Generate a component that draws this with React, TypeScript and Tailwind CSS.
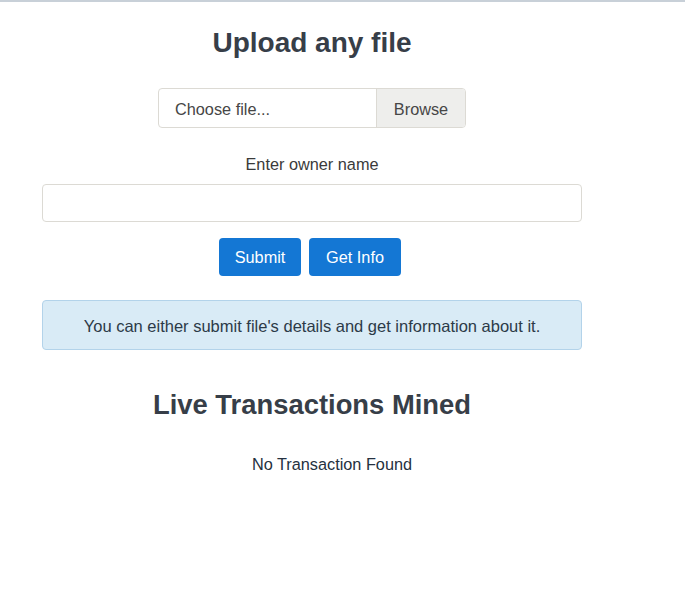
export default function App() {
  return (
    <div className="min-h-screen bg-white border-t-2 border-[#c8d0d8] font-['Liberation_Sans',Arial,sans-serif] text-[#373e48]">
      <div className="w-[540px] ml-[42px] flex flex-col items-center">
        <h1 className="mt-[24px] text-[28px] leading-[34px] font-bold">Upload any file</h1>

        <div className="mt-[28px] w-[308px] h-[40px] flex rounded border border-[#dcdad4] overflow-hidden text-[16.3px]">
          <div className="flex-1 flex items-center px-4 pt-[3px] text-[#464646]">Choose file...</div>
          <div className="w-[89px] flex items-center justify-center pt-[3px] bg-[#eeeeec] border-l border-[#dcdad4] text-[#464646]">Browse</div>
        </div>

        <label className="mt-[26px] text-[16.3px] leading-[20px] text-[#3a3a3a]">Enter owner name</label>
        <input className="mt-[10px] w-full h-[38px] rounded border border-[#dcdad4] px-3 outline-none" />

        <div className="mt-[16px] mr-[4px] flex gap-[8px]">
          <button className="w-[82px] h-[38px] rounded bg-[#1477d4] text-white text-[16.3px]">Submit</button>
          <button className="w-[92px] h-[38px] rounded bg-[#1477d4] text-white text-[16.3px]">Get Info</button>
        </div>

        <div className="mt-[24px] w-full h-[50px] pt-[2px] rounded border border-[#b3d3ea] bg-[#d9ebf6] flex items-center justify-center text-[16.5px] text-[#2c3a48]">
          You can either submit file's details and get information about it.
        </div>

        <h2 className="mt-[38px] text-[27.4px] leading-[34px] font-bold">Live Transactions Mined</h2>
        <p className="mt-[30px] ml-[40px] text-[16.3px] text-[#253140]">No Transaction Found</p>
      </div>
    </div>
  );
}
